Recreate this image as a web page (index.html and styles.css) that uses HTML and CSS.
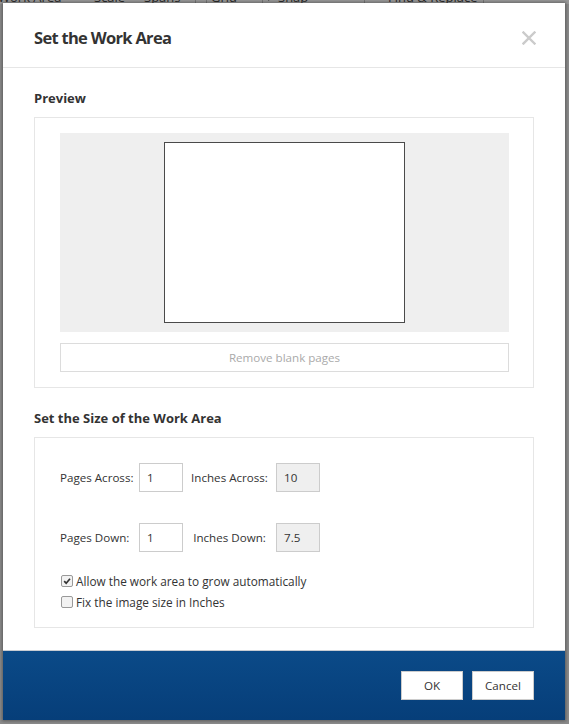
FILE: index.html
```html
<!DOCTYPE html>
<html lang="en">
<head>
<meta charset="utf-8">
<title>Set the Work Area</title>
<link rel="stylesheet" href="styles.css">
</head>
<body>
<div class="toolbar">
  <span class="tb-item tb-work">Work Area</span>
  <span class="tb-item tb-scale">Scale</span>
  <span class="tb-item tb-spans">Spans</span>
  <span class="tb-sep"></span>
  <span class="tb-item tb-grid">Grid</span>
  <span class="tb-sep tb-sep2"></span>
  <span class="tb-item tb-snap"><svg class="tb-pencil" viewBox="0 0 10 10" width="10" height="10"><path d="M2 8 L8 2" stroke="#222" stroke-width="2"/></svg>Snap</span>
  <span class="tb-sep tb-sep3"></span>
  <span class="tb-item tb-find">Find &amp; Replace</span>
  <span class="tb-sep tb-sep4"></span>
</div>

<div class="dialog">
  <div class="dlg-header">
    <h1 class="dlg-title">Set the Work Area</h1>
    <svg class="dlg-close" viewBox="0 0 14 14" width="14" height="14"><path d="M1.5 1.5 L12.5 12.5 M12.5 1.5 L1.5 12.5" stroke="#cbcbcb" stroke-width="2.4" stroke-linecap="square"/></svg>
  </div>

  <div class="dlg-body">
    <h2 class="section-title">Preview</h2>
    <div class="panel preview-panel">
      <div class="preview-area">
        <div class="page-rect"></div>
      </div>
      <div class="btn-remove">Remove blank pages</div>
    </div>

    <h2 class="section-title">Set the Size of the Work Area</h2>
    <div class="panel size-panel">
      <div class="size-grid">
        <span class="lbl">Pages Across:</span>
        <span class="inp">1</span>
        <span class="lbl lbl-c">Inches Across:</span>
        <span class="inp inp-ro">10</span>

        <span class="lbl">Pages Down:</span>
        <span class="inp">1</span>
        <span class="lbl lbl-c">Inches Down:</span>
        <span class="inp inp-ro">7.5</span>
      </div>
      <div class="checks">
        <div class="check-row">
          <span class="cbox"><svg viewBox="0 0 12 12" width="12" height="12"><path d="M2.6 6.2 L5 8.6 L9.6 3.2" fill="none" stroke="#333" stroke-width="2"/></svg></span>
          <span class="check-lbl">Allow the work area to grow automatically</span>
        </div>
        <div class="check-row">
          <span class="cbox"></span>
          <span class="check-lbl">Fix the image size in Inches</span>
        </div>
      </div>
    </div>
  </div>

  <div class="dlg-footer">
    <div class="btn">OK</div>
    <div class="btn">Cancel</div>
  </div>
</div>
</body>
</html>
```

FILE: styles.css
```css
html, body {
  margin: 0;
  padding: 0;
}
body {
  width: 569px;
  height: 724px;
  overflow: hidden;
  background: #8b8b8b;
  font-family: "Open Sans", "Noto Sans", sans-serif;
  color: #333;
  position: relative;
}

/* background toolbar (mostly hidden behind the dialog) */
.toolbar {
  position: relative;
  height: 14px;
  margin-top: -10px;
  background: #999;
  font-size: 13px;
  line-height: 14px;
  color: #2b2b2b;
}
.tb-item, .tb-sep {
  position: absolute;
  top: 0;
}
.tb-work { left: -2px; }
.tb-scale { left: 94px; }
.tb-spans { left: 144px; }
.tb-sep { left: 195px; width: 10px; height: 14px; border-left: 1px solid #777; border-right: 1px solid #777; }
.tb-grid { left: 211px; }
.tb-sep2 { left: 262px; width: 0; border-right: 0; }
.tb-snap { left: 266px; }
.tb-pencil { margin-right: 2px; }
.tb-sep3 { left: 364px; width: 0; border-right: 0; }
.tb-find { left: 388px; }
.tb-sep4 { left: 483px; width: 0; border-right: 0; }

/* dialog */
.dialog {
  position: absolute;
  left: 3px;
  top: 3px;
  width: 562px;
  height: 717px;
  background: #fff;
  box-shadow: 0 0 3px 1px rgba(0, 0, 0, 0.35);
  display: flex;
  flex-direction: column;
}
.dlg-header {
  border-bottom: 1px solid #e6e6e6;
  padding: 23px 29px 0 31px;
  box-sizing: border-box;
  height: 65px;
  display: flex;
  align-items: flex-start;
  justify-content: space-between;
}
.dlg-title {
  margin: 0;
  font-size: 16.5px;
  line-height: 24px;
  font-weight: 700;
  letter-spacing: -0.7px;
  color: #333;
}
.dlg-close {
  margin-top: 5px;
}

.dlg-body {
  flex: 1;
  padding: 20px 31px 0;
}
.section-title {
  margin: 0 0 9px;
  font-size: 13px;
  line-height: 20px;
  font-weight: 700;
  color: #333;
}
.panel {
  border: 1px solid #e6e6e6;
}
.preview-panel {
  padding: 15px 24px 15px 25px;
  margin-bottom: 20px;
}
.preview-area {
  background: #efefef;
  height: 199px;
  box-sizing: border-box;
  padding: 9px 0;
  display: flex;
  justify-content: center;
}
.page-rect {
  width: 241px;
  height: 181px;
  box-sizing: border-box;
  border: 1px solid #4a4a4a;
  background: #fff;
}
.btn-remove {
  margin-top: 11px;
  height: 29px;
  box-sizing: border-box;
  border: 1px solid #dcdcdc;
  display: flex;
  align-items: center;
  justify-content: center;
  font-size: 11.6px;
  color: #aaa;
}

.size-panel {
  padding: 25px 25px 15px;
}
.size-grid {
  display: grid;
  grid-template-columns: 79px 44px 93px 44px;
  row-gap: 31px;
  align-items: center;
}
.lbl {
  font-size: 11.6px;
  color: #333;
  white-space: nowrap;
}
.lbl-c {
  text-align: center;
}
.inp {
  height: 29px;
  box-sizing: border-box;
  border: 1px solid #ccc;
  background: #fff;
  font-size: 11.6px;
  color: #333;
  display: flex;
  align-items: center;
  padding-left: 7px;
}
.inp-ro {
  background: #efefef;
}
.checks {
  margin-top: 18px;
}
.check-row {
  display: flex;
  align-items: center;
  height: 21px;
}
.cbox {
  width: 12px;
  height: 12px;
  box-sizing: border-box;
  border: 1px solid #999;
  border-radius: 2px;
  background: #f2f2f2;
  margin: 0 3px 0 1px;
  display: flex;
  align-items: center;
  justify-content: center;
}
.cbox svg {
  display: block;
}
.check-lbl {
  font-size: 11.8px;
  color: #333;
}

.dlg-footer {
  height: 70px;
  box-sizing: border-box;
  background: linear-gradient(#0b4a88, #063e79);
  border-top: 1px solid #c8ccd2;
  padding: 20px 31px 0 0;
  display: flex;
  justify-content: flex-end;
  align-items: flex-start;
  gap: 9px;
}
.btn {
  width: 62px;
  height: 29px;
  box-sizing: border-box;
  background: #fff;
  border: 1px solid #ccc;
  display: flex;
  align-items: center;
  justify-content: center;
  font-size: 11.6px;
  color: #333;
}
```
